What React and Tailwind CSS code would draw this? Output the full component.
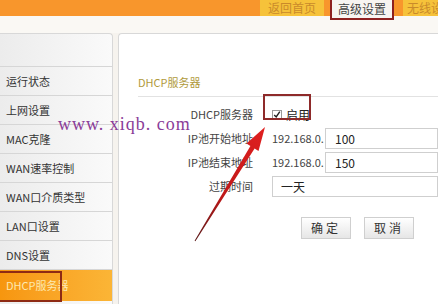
import React from "react";

const menu = [
  "运行状态",
  "上网设置",
  "MAC克隆",
  "WAN速率控制",
  "WAN口介质类型",
  "LAN口设置",
  "DNS设置",
];

const App = () => {
  return (
    <div
      className="relative w-[438px] h-[304px] overflow-hidden bg-[#f6f3ee] text-[11px] text-[#333]"
      style={{ fontFamily: '"Noto Sans CJK SC", "DejaVu Sans", sans-serif' }}
    >
      {/* Top bar */}
      <div className="flex h-[16px] bg-[#f8962c] pl-[260px]">
        <div className="flex h-[16px] w-[64px] items-center justify-center bg-[#f6c23a] text-[12px] text-[#c98a2a]">
          返回首页
        </div>
        <div className="relative z-10 ml-[6px] flex h-[20px] w-[64px] items-center justify-center border-2 border-t-0 border-[#8e2020] bg-[#f7f4f1] text-[12px] text-[#444]">
          高级设置
        </div>
        <div className="ml-[9px] flex h-[16px] min-w-0 flex-1 items-center overflow-hidden whitespace-nowrap bg-[#f6c23a] pl-[4px] text-[12px] text-[#c98a2a]">
          无线设置
        </div>
      </div>
      <div className="h-[17px] bg-[#faf8f4]" />

      <div className="flex h-[271px]">
        {/* Sidebar */}
        <div className="w-[113px] rounded-tr-[4px] border-r border-t border-[#d8d8d8] bg-gradient-to-r from-[#ececec] to-[#fafafa]">
          <div className="h-[33px] border-b border-[#d6d6d6]" />
          {menu.map((m) => (
            <div
              key={m}
              className="flex h-[29px] items-center border-b border-[#d6d6d6] pl-[6px] text-[11px] text-[#333]"
            >
              {m}
            </div>
          ))}
          <div className="relative flex h-[31px] items-center bg-gradient-to-r from-[#f7960e] to-[#fbb536] pl-[6px] text-[11px] text-[#fde9b0]">
            <div className="absolute left-0 top-[1px] h-[31px] w-[62px] border-2 border-l-0 border-[#8e2a14]" />
            DHCP服务器
          </div>
        </div>

        {/* Main panel */}
        <div className="ml-[5px] flex-1 rounded-tl-[4px] border-l border-t border-[#d8d8d8] bg-white">
          <div className="ml-[19px] border-b border-[#e2e2e2] pb-[5px] pt-[40px] text-[11px] text-[#b09a3c]">
            DHCP服务器
          </div>

          <div className="mt-[6px]">
            <div className="flex h-[24px] items-center">
              <div className="w-[134px] text-right text-[#444]">DHCP服务器</div>
              <div className="relative ml-[19px] flex items-center gap-[4px]">
                <div className="absolute left-[-9px] top-[-12px] h-[26px] w-[48px] border-2 border-[#8e2a2a]" />
                <div className="flex h-[10px] w-[10px] items-center justify-center border border-[#999] bg-white">
                  <svg width="9" height="9" viewBox="0 0 10 10">
                    <path d="M1.5 5.5 L4 8 L8.5 1.5" fill="none" stroke="#222" strokeWidth="1.8" />
                  </svg>
                </div>
                <span className="text-[12px] text-[#222]">启用</span>
              </div>
            </div>

            <div className="flex h-[24px] items-center">
              <div className="w-[134px] text-right text-[#444]">IP池开始地址</div>
              <div className="ml-[19px] w-[53px] text-[#444]">192.168.0.</div>
              <div className="flex h-[21px] flex-1 items-center border border-[#cfcfcf] pl-[9px] text-[12px] text-[#222]">
                100
              </div>
            </div>

            <div className="flex h-[24px] items-center">
              <div className="w-[134px] text-right text-[#444]">IP池结束地址</div>
              <div className="ml-[19px] w-[53px] text-[#444]">192.168.0.</div>
              <div className="flex h-[21px] flex-1 items-center border border-[#cfcfcf] pl-[9px] text-[12px] text-[#222]">
                150
              </div>
            </div>

            <div className="flex h-[24px] items-center">
              <div className="w-[134px] text-right text-[#444]">过期时间</div>
              <div className="ml-[19px] flex h-[21px] flex-1 items-center border border-[#cfcfcf] pl-[8px] text-[12px] text-[#222]">
                一天
              </div>
            </div>
          </div>

          <div className="mt-[18px] flex gap-[13px] pl-[182px]">
            <button className="h-[22px] w-[50px] border border-[#cfcfcf] bg-gradient-to-b from-white to-[#e6e6e6] text-[12px] tracking-[3px] text-[#333]">
              确定
            </button>
            <button className="h-[22px] w-[50px] border border-[#cfcfcf] bg-gradient-to-b from-white to-[#e6e6e6] text-[12px] tracking-[3px] text-[#333]">
              取消
            </button>
          </div>
        </div>
      </div>

      {/* Watermark */}
      <div
        className="absolute left-[58px] top-[111px] text-[18px] tracking-[1px] text-[#8a3c98]"
        style={{ fontFamily: '"Liberation Serif", serif' }}
      >
        www. xiqb. com
      </div>

      {/* Red annotation arrow */}
      <svg className="pointer-events-none absolute left-0 top-0" width="438" height="304">
        <defs>
          <linearGradient id="ar" x1="195" y1="241" x2="265" y2="127" gradientUnits="userSpaceOnUse">
            <stop offset="0" stopColor="#5a1a1a" />
            <stop offset="0.4" stopColor="#c01818" />
            <stop offset="1" stopColor="#e02020" />
          </linearGradient>
        </defs>
        <polygon
          points="195.4,241.2 254.6,148.6 258.5,151 265,127 246.5,143.6 250.4,146 194.6,240.8"
          fill="url(#ar)"
        />
      </svg>
    </div>
  );
};

export default App;
